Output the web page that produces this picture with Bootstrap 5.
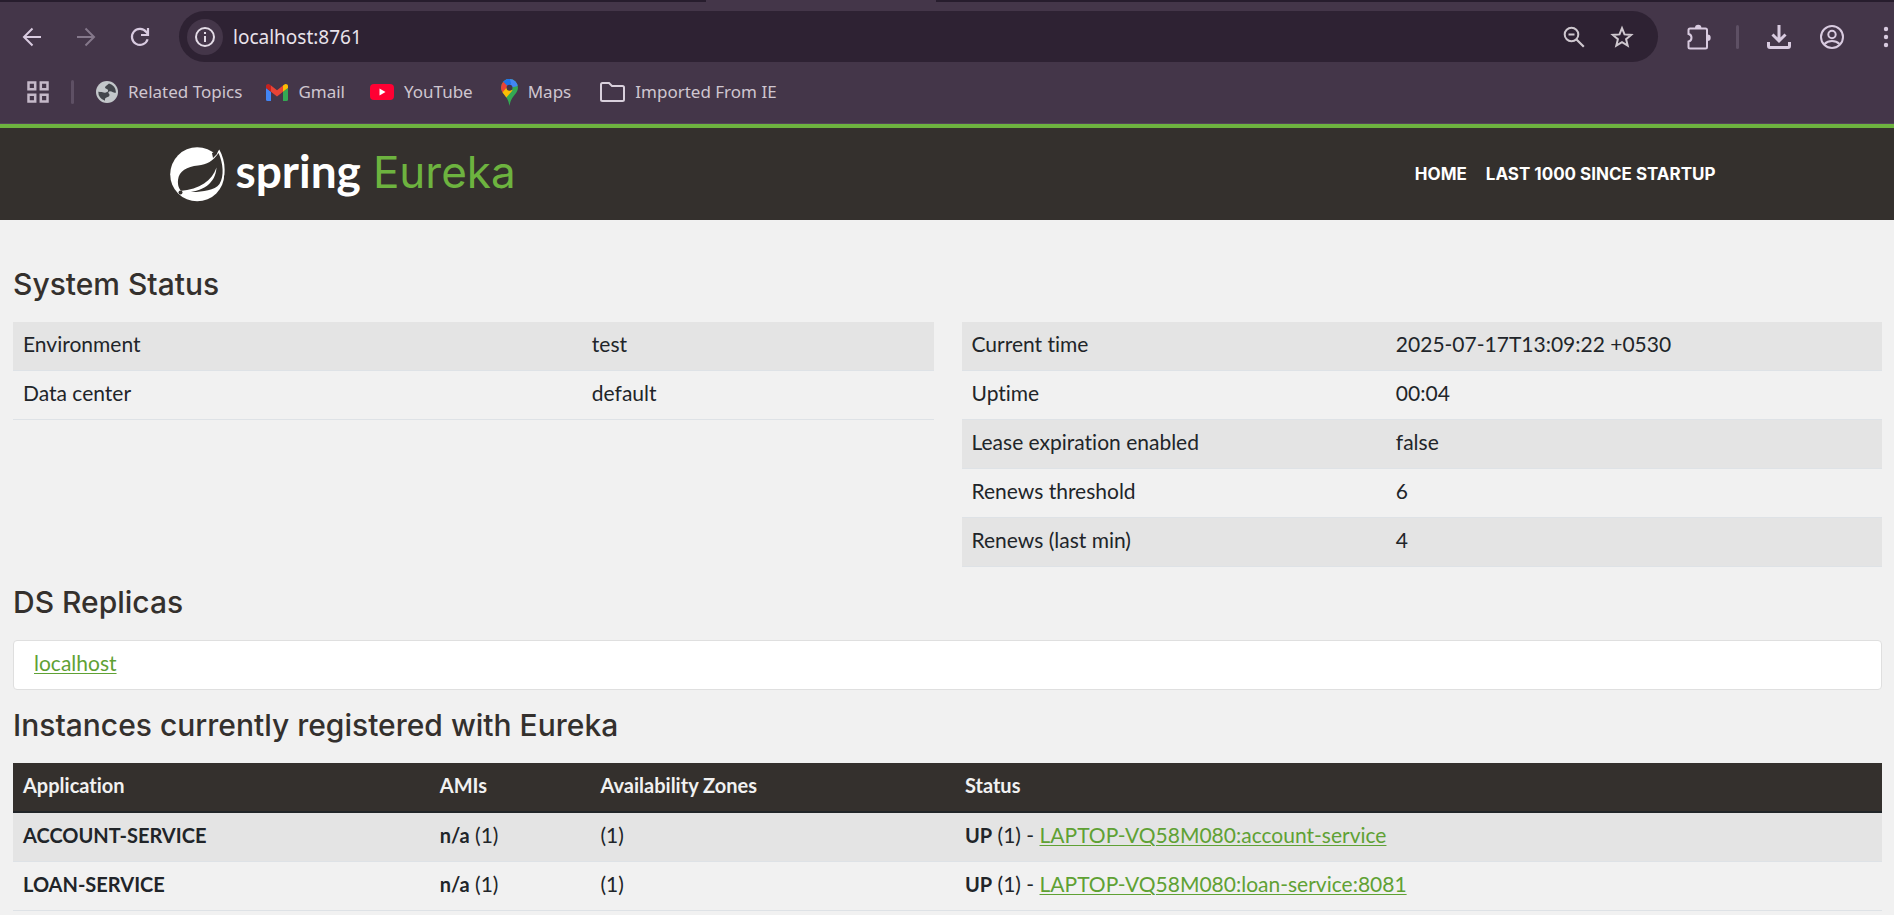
<!DOCTYPE html>
<html lang="en">
<head>
<meta charset="utf-8">
<meta name="viewport" content="width=device-width, initial-scale=1">
<title>Eureka</title>
<link href="https://cdn.jsdelivr.net/npm/bootstrap@5.3.0/dist/css/bootstrap.min.css" rel="stylesheet">
<style>
  body { background: #f1f1f1; color: #212529; font: 400 21px/28px Lato, sans-serif; font-variant-ligatures: none; overflow-x: hidden; }
  button { background: none; border: 0; padding: 0; color: inherit; }
  svg { display: block; flex: none; }

  /* Browser frame */
  .tab-strip { height: 2px; background: #271d2d; }
  .tab-active { width: 230px; height: 2px; margin-left: 706px; background: #443649; }
  .chrome { background: #443649; color: #d9cbe0; height: 122px; padding-top: 9px; border-bottom: 1px solid #53455a; font: 17px/24px "Noto Sans", sans-serif; }
  .chrome-btn { width: 36px; height: 36px; display: grid; place-items: center; flex: none; }
  .nav-btns { gap: 18px; margin: 0 21px 0 14px; }
  .address { height: 51px; border-radius: 26px; background: #2e2233; padding: 0 18px 0 8px; color: #cfc8cf; }
  .address .chrome-btn.site-info { background: #443649; border-radius: 50%; color: #e3dce6; }
  .address input { background: none; border: 0; outline: 0; color: #e9e3eb; font-size: 19px; margin-left: 8px; min-width: 0; }
  .divider { width: 3px; height: 24px; border-radius: 2px; background: #5e5064; flex: none; }
  .bookmarks { margin-top: 18px; padding-left: 27px; height: 24px; }
  .bookmarks a { color: #cfc6d0; text-decoration: none; gap: 10px; white-space: nowrap; }

  /* Page header */
  .top-nav { background: #34302d; border-top: 4px solid #6db33f; height: 96px; }
  .top-nav .inner { max-width: 1554px; width: 82%; }
  .brand { color: #fff; text-decoration: none; }
  .brand-text { padding-bottom: 6px; }
  .brand-spring { font: 700 46px/50px Lato, sans-serif; margin-left: 9px; }
  .brand-eureka { font: 400 44px/50px Inter, sans-serif; color: #6db33f; margin-left: 12px; }
  .menu a { color: #fff; text-decoration: none; font: 700 17px/24px Inter, sans-serif; }
  .menu { gap: 19px; padding-right: 8px; }

  /* Content */
  .page { padding: 29px 12px 0 13px; }
  h1 { font: 500 30px/36px Inter, sans-serif; color: #34302d; margin: 17px 0 20px; }
  .status-grid { display: grid; grid-template-columns: 1fr 1fr; gap: 28px; align-items: start; }
  .table { --bs-table-striped-bg: #e4e4e4; --bs-table-bg: transparent; table-layout: fixed; margin: 0; color: #212529; }
  .table > :not(caption) > * > * { padding: 8px 10px 12px; border-bottom: 1px solid #dee2e6; }
  .table b, .table th { font-size: 20px; font-weight: 700; }
  .table > thead > tr > th { background: #34302d; color: #f1f1f1; border-bottom: 2px solid #212529; }
  .replicas { background: #fff; border: 1px solid #dfdfdf; border-radius: 4px; padding: 8px 20px 12px; }
  .page a { color: #5fa134; text-decoration: underline; text-decoration-thickness: 1px; text-underline-offset: 2px; }
</style>
</head>
<body>
<div class="tab-strip"><div class="tab-active"></div></div>
<div class="chrome">
  <div class="d-flex align-items-center">
    <div class="nav-btns d-flex">
      <button class="chrome-btn" aria-label="Back"><svg width="20" height="20" viewBox="0 0 20 20" fill="none" stroke="currentColor" stroke-width="2"><path d="M19 10H2.500M10.500 1.500L2 10l8.500 8.500"/></svg></button>
      <button class="chrome-btn" aria-label="Forward"><svg width="20" height="20" viewBox="0 0 20 20" fill="none" stroke="#85788b" stroke-width="2"><path d="M1 10h16.500M9.500 1.500L18 10l-8.500 8.500"/></svg></button>
      <button class="chrome-btn" aria-label="Reload"><svg width="20" height="20" viewBox="0 0 20 20" fill="none" stroke="currentColor" stroke-width="2.200"><path d="M17.600 12.200A8 8 0 1 1 16.300 5L18 7M18 1v7h-7"/></svg></button>
    </div>
    <div class="address d-flex align-items-center flex-grow-1">
      <button class="chrome-btn site-info" aria-label="Site information"><svg width="20" height="20" viewBox="0 0 20 20"><circle cx="10" cy="10" r="9" fill="none" stroke="currentColor" stroke-width="2"/><path d="M9 9h2v6H9zM9 5h2v2H9z" fill="currentColor"/></svg></button>
      <input class="flex-grow-1" type="text" value="localhost:8761" aria-label="Address">
      <button class="chrome-btn" aria-label="Zoom"><svg width="22" height="22" viewBox="0 0 22 22" fill="none" stroke="currentColor" stroke-width="2"><circle cx="8.500" cy="8.500" r="6.800"/><path d="M5.500 8.500h6M13.500 13.500l7.300 7.300" stroke-width="2.200"/></svg></button>
      <button class="chrome-btn" style="margin-left:12px" aria-label="Bookmark this tab"><svg width="24" height="24" viewBox="0 0 24 24" fill="none" stroke="currentColor" stroke-width="2"><path d="M12 3.200l2.500 6.200 6.700.5-5.100 4.300 1.600 6.500-5.700-3.500-5.700 3.500 1.600-6.500-5.100-4.300 6.700-.5z"/></svg></button>
    </div>
    <button class="chrome-btn" style="margin-left:23px" aria-label="Extensions"><svg width="26" height="26" viewBox="0 0 26 26"><path d="M4 4.500h15.500a1.500 1.500 0 0 1 1.500 1.500v17a1.500 1.500 0 0 1-1.500 1.500H4A1.500 1.500 0 0 1 2.500 23v-5.500c4-.8 4-6.700 0-7.500V6A1.500 1.500 0 0 1 4 4.500z" fill="none" stroke="currentColor" stroke-width="2"/><path d="M9 4a3.200 3.200 0 0 1 6.400 0zM21.500 10.500a3.200 3.200 0 0 1 0 6.400z" fill="currentColor"/></svg></button>
    <div class="divider" style="margin:0 22px 0 19px"></div>
    <button class="chrome-btn" aria-label="Downloads"><svg width="24" height="24" viewBox="0 0 24 24" fill="none" stroke="currentColor" stroke-width="3"><path d="M12 0v15M5.500 9.500l6.500 6.500 6.500-6.500M1.500 17v4a1.500 1.500 0 0 0 1.500 1.500h18a1.500 1.500 0 0 0 1.500-1.500v-4"/></svg></button>
    <button class="chrome-btn" style="margin:0 28px 0 17px" aria-label="Profile"><svg width="24" height="24" viewBox="0 0 24 24" fill="none" stroke="currentColor" stroke-width="2"><circle cx="12" cy="12" r="11"/><circle cx="12" cy="9.500" r="3.700"/><path d="M4.500 19c4-4 11-4 15 0"/></svg></button>
    <button aria-label="Menu"><svg width="16" height="24" viewBox="0 0 16 24" fill="currentColor"><circle cx="8" cy="4" r="2.200"/><circle cx="8" cy="12" r="2.200"/><circle cx="8" cy="20" r="2.200"/></svg></button>
  </div>
  <div class="bookmarks d-flex align-items-center">
    <button aria-label="Apps"><svg width="22" height="22" viewBox="0 0 22 22" fill="none" stroke="#c5b9c9" stroke-width="2.500"><path d="M1.500 1.500h6.700v6.700H1.500zM13.800 1.500h6.700v6.700h-6.700zM1.500 13.800h6.700v6.700H1.500zM13.800 13.800h6.700v6.700h-6.700z"/></svg></button>
    <div class="divider" style="margin:0 22px"></div>
    <a href="#" class="d-flex align-items-center"><svg width="22" height="22" viewBox="0 0 22 22"><circle cx="11" cy="11" r="11" fill="#c3c7ca"/><path d="M13 2.500c-1.500 1.700-3.500 2-4 4 0 1.500 2.500 1 3 2.500.5 1.700-1 2.500-3 2.500-2.500 0-4-1-6.700-1A9 9 0 0 0 9 19.800c0-1.300-.2-2.300 1-3 1.300-.8 3.500-.7 3.500-2.700 0-1.600-1.700-1.600-1-3 1-1.500 3-.5 4.500.2 1.200.6 2 .4 3 .2A9 9 0 0 0 13 2.500z" fill="#43464c"/><path d="M9 4c-4 1-6.500 4-6.800 6.500 3 0 5 1.200 7 1 2-.3 2-2 .5-2.700C7.700 8 9 5.500 9 4z" fill="#c3c7ca"/></svg>Related Topics</a>
    <a href="#" class="d-flex align-items-center" style="margin-left:24px"><svg width="22" height="17" viewBox="0 0 22 17"><path d="M0 4l5 3.700V17H1.500A1.500 1.500 0 0 1 0 15.500z" fill="#4285f4"/><path d="M22 4l-5 3.700V17h3.500a1.500 1.500 0 0 0 1.500-1.500z" fill="#34a853"/><path d="M5 1.500l6 4.700 6-4.700v6.300l-6 4.600-6-4.600z" fill="#ea4335"/><path d="M0 4V2.400C0 .3 2.300-.6 4 .7l1 .8v6.300z" fill="#c5221f"/><path d="M22 4V2.400C22 .3 19.700-.6 18 .7l-1 .8v6.300z" fill="#fbbc04"/></svg>Gmail</a>
    <a href="#" class="d-flex align-items-center" style="margin-left:25px"><svg width="24" height="16" viewBox="0 0 24 16"><rect width="24" height="16" rx="4" fill="#ff0033"/><path d="M9.500 4.500v7l6-3.500z" fill="#fff"/></svg>YouTube</a>
    <a href="#" class="d-flex align-items-center" style="margin-left:28px"><svg width="17" height="27" viewBox="0 0 17 27"><defs><clipPath id="pin"><path d="M8.500 0A8.500 8.500 0 0 0 0 8.500c0 3 1.500 5 3.500 7.500S7.500 21 8.500 27c1-6 3-8.500 5-11s3.500-4.500 3.500-7.500A8.500 8.500 0 0 0 8.500 0z"/></clipPath></defs><g clip-path="url(#pin)"><path d="M0 0h17v27H0z" fill="#34a853"/><path d="M0 0h17v7L8.500 9z" fill="#4285f4"/><path d="M0 0h9L10 5 6 8 2 3z" fill="#1a73e8"/><path d="M0 3h2.500L7 7.500 1.500 14 0 13z" fill="#ea4335"/><path d="M1 14l6-7 4.500 4.500L4 20z" fill="#fbbc04"/></g><circle cx="8.500" cy="8.700" r="3" fill="#443649"/></svg>Maps</a>
    <a href="#" class="d-flex align-items-center" style="margin-left:29px"><svg width="25" height="20" viewBox="0 0 25 20" fill="none" stroke="#d9d0dc" stroke-width="2"><path d="M2.500 1h6.500l3 3h10.500A1.500 1.500 0 0 1 24 5.500v12a1.500 1.500 0 0 1-1.500 1.500h-20A1.500 1.500 0 0 1 1 17.500v-15A1.500 1.500 0 0 1 2.500 1z"/></svg>Imported From IE</a>
  </div>
</div>

<nav class="top-nav d-flex align-items-center">
  <div class="inner mx-auto d-flex align-items-center justify-content-between">
    <a href="#" class="brand d-flex align-items-center">
      <svg width="56" height="55" viewBox="0 0 56 55"><circle cx="27.200" cy="27.300" r="27" fill="#fff"/><path d="M49.300 2.500c5 9 7.500 22 3 32L44 40V10z" fill="#fff"/><path d="M42 6l6-2.500-1 3.500-4 4z" fill="#34302d"/><path d="M48.600 6C43 14 37 17.500 28 18.500 17 19.500 9 24 8 33c-.5 5 1 9 3.500 11 6 1.500 31 2.500 38-7 5-8 3.500-21-.9-31z" fill="#34302d"/><path d="M10 44c20-2 32-10 36.500-23.500C45.500 36 34 45 12 46z" fill="#fff"/><circle cx="10.500" cy="45.500" r="2" fill="#34302d"/></svg>
      <span class="brand-text d-flex align-items-baseline"><span class="brand-spring">spring</span><span class="brand-eureka">Eureka</span></span>
    </a>
    <div class="menu d-flex"><a href="#">HOME</a><a href="#">LAST 1000 SINCE STARTUP</a></div>
  </div>
</nav>

<main class="page">
  <h1>System Status</h1>
  <div class="status-grid">
    <table class="table table-striped">
      <colgroup><col style="width:61.8%"><col></colgroup>
      <tbody>
        <tr><td>Environment</td><td>test</td></tr>
        <tr><td>Data center</td><td>default</td></tr>
      </tbody>
    </table>
    <table class="table table-striped">
      <colgroup><col style="width:46.1%"><col></colgroup>
      <tbody>
        <tr><td>Current time</td><td>2025-07-17T13:09:22 +0530</td></tr>
        <tr><td>Uptime</td><td>00:04</td></tr>
        <tr><td>Lease expiration enabled</td><td>false</td></tr>
        <tr><td>Renews threshold</td><td>6</td></tr>
        <tr><td>Renews (last min)</td><td>4</td></tr>
      </tbody>
    </table>
  </div>

  <h1>DS Replicas</h1>
  <div class="replicas"><a href="#">localhost</a></div>

  <h1>Instances currently registered with Eureka</h1>
  <table class="table table-striped">
    <colgroup><col style="width:22.3%"><col style="width:8.6%"><col style="width:19.5%"><col></colgroup>
    <thead><tr><th>Application</th><th>AMIs</th><th>Availability Zones</th><th>Status</th></tr></thead>
    <tbody>
      <tr><td><b>ACCOUNT-SERVICE</b></td><td><b>n/a</b> (1)</td><td>(1)</td><td><b>UP</b> (1) - <a href="#">LAPTOP-VQ58M080:account-service</a></td></tr>
      <tr><td><b>LOAN-SERVICE</b></td><td><b>n/a</b> (1)</td><td>(1)</td><td><b>UP</b> (1) - <a href="#">LAPTOP-VQ58M080:loan-service:8081</a></td></tr>
    </tbody>
  </table>
</main>
<script src="https://cdn.jsdelivr.net/npm/bootstrap@5.3.0/dist/js/bootstrap.bundle.min.js"></script>
</body>
</html>
